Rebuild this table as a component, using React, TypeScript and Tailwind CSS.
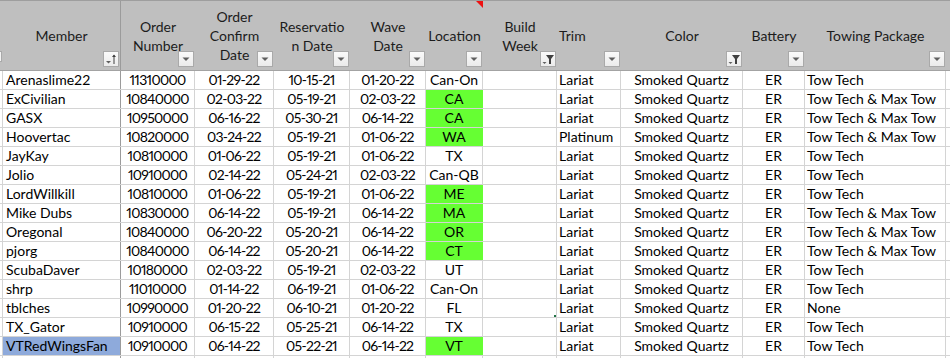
import React from "react";

type Align = "left" | "center";
type Filter = "drop" | "sort" | "funnel";

interface Col {
  key: string;
  w: string;
  label: string[];
  headAlign: Align;
  filter: Filter;
}

const cols: Col[] = [
  { key: "member", w: "w-[118px]", label: ["Member"], headAlign: "center", filter: "sort" },
  { key: "order", w: "w-[74px]", label: ["Order", "Number"], headAlign: "center", filter: "drop" },
  { key: "confirm", w: "w-[79px]", label: ["Order", "Confirm", "Date"], headAlign: "center", filter: "drop" },
  { key: "reserve", w: "w-[76px]", label: ["Reservatio", "n Date"], headAlign: "center", filter: "drop" },
  { key: "wave", w: "w-[76px]", label: ["Wave", "Date"], headAlign: "center", filter: "drop" },
  { key: "loc", w: "w-[57px]", label: ["Location"], headAlign: "center", filter: "drop" },
  { key: "week", w: "w-[74px]", label: ["Build", "Week"], headAlign: "center", filter: "funnel" },
  { key: "trim", w: "w-[64px]", label: ["Trim"], headAlign: "left", filter: "drop" },
  { key: "color", w: "w-[122px]", label: ["Color"], headAlign: "center", filter: "funnel" },
  { key: "battery", w: "w-[62px]", label: ["Battery"], headAlign: "center", filter: "drop" },
  { key: "tow", w: "w-[141px]", label: ["Towing Package"], headAlign: "center", filter: "drop" },
];

const TT = "Tow Tech";
const TM = "Tow Tech & Max Tow";

// member, order, confirm, reserve, wave, loc, green?, trim, tow
const rows: [string, string, string, string, string, string, boolean, string, string][] = [
  ["Arenaslime22", "11310000", "01-29-22", "10-15-21", "01-20-22", "Can-On", false, "Lariat", TT],
  ["ExCivilian", "10840000", "02-03-22", "05-19-21", "02-03-22", "CA", true, "Lariat", TM],
  ["GASX", "10950000", "06-16-22", "05-30-21", "06-14-22", "CA", true, "Lariat", TM],
  ["Hoovertac", "10820000", "03-24-22", "05-19-21", "01-06-22", "WA", true, "Platinum", TM],
  ["JayKay", "10810000", "01-06-22", "05-19-21", "01-06-22", "TX", false, "Lariat", TT],
  ["Jolio", "10910000", "02-14-22", "05-24-21", "02-03-22", "Can-QB", false, "Lariat", TT],
  ["LordWillkill", "10810000", "01-06-22", "05-19-21", "01-06-22", "ME", true, "Lariat", TT],
  ["Mike Dubs", "10830000", "06-14-22", "05-19-21", "06-14-22", "MA", true, "Lariat", TM],
  ["Oregonal", "10840000", "06-20-22", "05-20-21", "06-14-22", "OR", true, "Lariat", TM],
  ["pjorg", "10840000", "06-14-22", "05-20-21", "06-14-22", "CT", true, "Lariat", TM],
  ["ScubaDaver", "10180000", "02-03-22", "05-19-21", "02-03-22", "UT", false, "Lariat", TT],
  ["shrp", "11010000", "01-14-22", "06-19-21", "01-06-22", "Can-On", false, "Lariat", TT],
  ["tblches", "10990000", "01-20-22", "06-10-21", "01-20-22", "FL", false, "Lariat", "None"],
  ["TX_Gator", "10910000", "06-15-22", "05-25-21", "06-14-22", "TX", false, "Lariat", TT],
  ["VTRedWingsFan", "10910000", "06-14-22", "05-22-21", "06-14-22", "VT", true, "Lariat", TT],
];

function FilterIcon({ kind }: { kind: Filter }) {
  if (kind === "drop") {
    return (
      <svg width="14" height="14" viewBox="0 0 14 14">
        <polygon points="3.5,5.5 10.5,5.5 7,9" fill="#5f5f5f" />
      </svg>
    );
  }
  if (kind === "sort") {
    return (
      <svg width="14" height="14" viewBox="0 0 14 14">
        <polygon points="2,9 7,9 4.5,11.5" fill="#5f5f5f" />
        <rect x="9.5" y="3" width="1" height="9" fill="#404040" />
        <polygon points="8,5 12,5 10,2.5" fill="#404040" />
      </svg>
    );
  }
  return (
    <svg width="14" height="14" viewBox="0 0 14 14">
      <polygon points="1.5,10 5.5,10 3.5,12" fill="#5f5f5f" />
      <polygon points="5,3 13,3 10,7 10,12 8,12 8,7" fill="#404040" />
    </svg>
  );
}

function FilterButton({ kind }: { kind: Filter }) {
  return (
    <div className="absolute right-[1px] top-[50px] flex h-[16px] w-[16px] items-center justify-center border border-[#a9a9a9] bg-gradient-to-b from-[#fafafa] to-[#ebebeb]">
      <FilterIcon kind={kind} />
    </div>
  );
}

function HeaderRow() {
  return (
    <div className="flex h-[71px] border-t border-b border-t-[#9e9e9e] border-b-[#a3a3a3] bg-[#bfbfbf] text-[#1c1c1c]">
      <div className="relative w-[3px] shrink-0">
        <div className="absolute right-[1px] top-[50px] h-[11px] w-[6px] border border-[#a9a9a9] bg-[#f3f3f3]" />
      </div>
      {cols.map((c, i) => (
        <div
          key={c.key}
          className={`relative shrink-0 ${c.w} ${i === 0 ? "border-r border-r-[#9b9b9b]" : ""} flex items-center ${
            c.headAlign === "left" ? "justify-start pl-[2px]" : "justify-center"
          }`}
        >
          <div className={`whitespace-nowrap leading-[19px] ${c.headAlign === "left" ? "text-left" : "text-center"}`}>
            {c.label.map((l) => (
              <div key={l}>{l}</div>
            ))}
          </div>
          <FilterButton kind={c.filter} />
          {c.key === "loc" && (
            <svg className="absolute right-0 top-0" width="7" height="7" viewBox="0 0 7 7">
              <polygon points="0,0 7,0 7,7" fill="#ee1111" />
            </svg>
          )}
        </div>
      ))}
      <div className="flex-1" />
    </div>
  );
}

function Cell({
  w,
  align,
  num = false,
  children,
  extra = "",
}: {
  w: string;
  align: Align;
  num?: boolean;
  children?: React.ReactNode;
  extra?: string;
}) {
  return (
    <div
      className={`shrink-0 ${w} h-full overflow-hidden whitespace-nowrap border-r border-r-[#d4d4d4] ${
        align === "left" ? "pl-[3px] text-left" : "text-center"
      } ${num ? "tracking-[-0.7px] [font-variant-numeric:proportional-nums]" : ""} ${extra}`}
    >
      {children}
    </div>
  );
}

export default function App() {
  return (
    <div
      className="relative h-[358px] w-[950px] overflow-hidden bg-white text-[14px] text-black"
      style={{ fontFamily: "Lato, 'Open Sans', sans-serif" }}
    >
      <HeaderRow />
      {rows.map((r, idx) => {
        const last = idx === rows.length - 1;
        return (
          <div key={r[0]} className="flex h-[19px] border-b border-b-[#d4d4d4] leading-[18px]">
            <div className="h-full w-[3px] shrink-0 border-r border-r-[#d4d4d4]" />
            <Cell w="w-[118px]" align="left" extra={`!border-r-[#9b9b9b] ${last ? "bg-[#8eaadb]" : ""}`}>
              {r[0]}
            </Cell>
            <Cell w="w-[74px]" align="center" num>{r[1]}</Cell>
            <Cell w="w-[79px]" align="center" num>{r[2]}</Cell>
            <Cell w="w-[76px]" align="center" num>{r[3]}</Cell>
            <Cell w="w-[76px]" align="center" num>{r[4]}</Cell>
            <Cell w="w-[57px]" align="center" extra={r[6] ? "bg-[#66ff33] !border-r-[#66ff33]" : ""}>
              {r[5]}
            </Cell>
            <Cell w="w-[74px]" align="center" />
            <Cell w="w-[64px]" align="left" extra="!pl-[2px]">{r[7]}</Cell>
            <Cell w="w-[122px]" align="center">Smoked Quartz</Cell>
            <Cell w="w-[62px]" align="center">ER</Cell>
            <Cell w="w-[141px]" align="left" extra="!pl-[2px]">{r[8]}</Cell>
            <div className="h-full flex-1" />
          </div>
        );
      })}
      <div className="flex h-[19px]">
        <div className="h-full w-[3px] shrink-0 border-r border-r-[#d4d4d4]" />
        <Cell w="w-[118px]" align="left" extra="!border-r-[#9b9b9b]" />
        <Cell w="w-[74px]" align="center" />
        <Cell w="w-[79px]" align="center" />
        <Cell w="w-[76px]" align="center" />
        <Cell w="w-[76px]" align="center" />
        <Cell w="w-[57px]" align="center" />
        <Cell w="w-[74px]" align="center" />
        <Cell w="w-[64px]" align="left" />
        <Cell w="w-[122px]" align="center" />
        <Cell w="w-[62px]" align="center" />
        <Cell w="w-[141px]" align="left" />
      </div>
      <div className="absolute left-[554px] top-[315px] h-[2px] w-[2px] bg-[#217346]" />
    </div>
  );
}
